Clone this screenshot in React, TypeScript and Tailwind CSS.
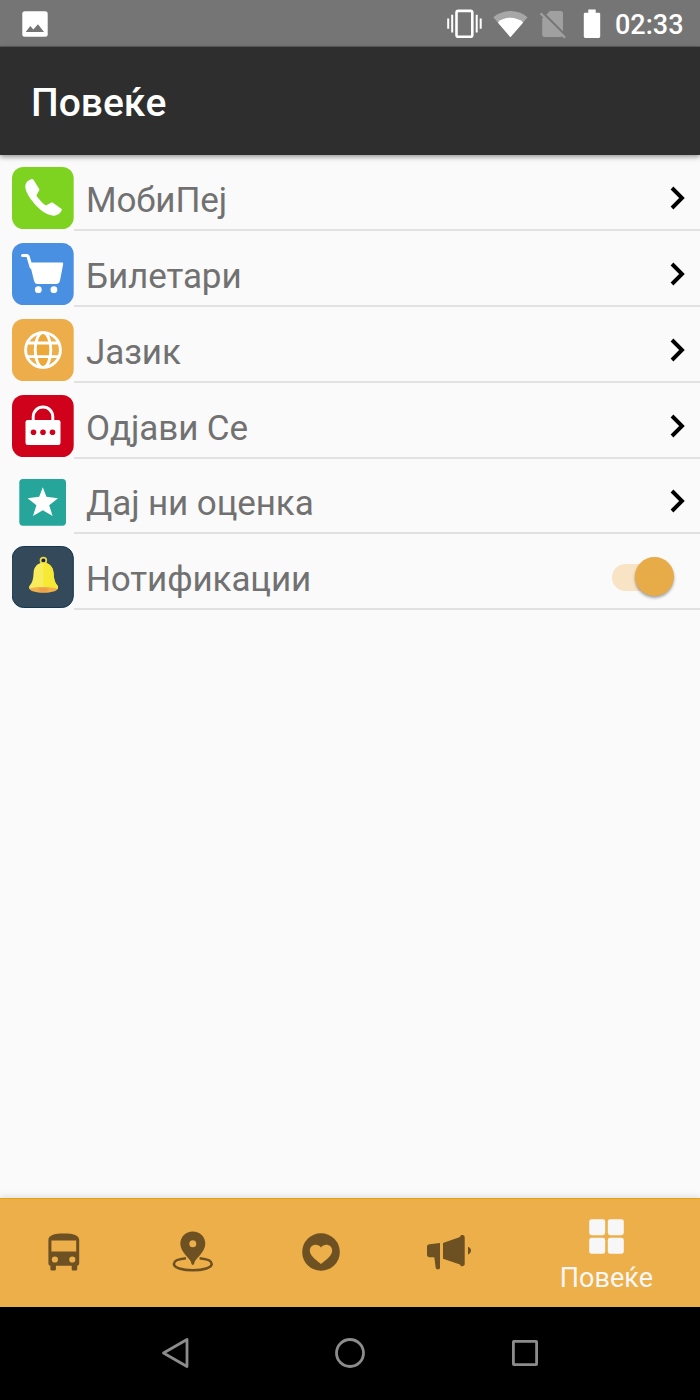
import React from "react";

function StatusBar() {
	return (
		<div className="flex h-[47px] shrink-0 items-center border-b border-[#5c5c5c] bg-[#757575] pl-[22px] pr-[15px] pt-px">
			<svg width="26" height="26" viewBox="0 0 26 26">
				<rect x="0.3" y="0.3" width="25.4" height="25.4" rx="2.5" fill="#fff" />
				<path d="M3.7 21 8.3 15l3 3.6 4.7-5.3L22 21z" fill="#757575" />
			</svg>
			<div className="ml-auto flex items-center">
				<svg width="35" height="30" viewBox="0 0 35 30" stroke="#fff" fill="none">
					<rect x="9.5" y="1.9" width="15.8" height="25.8" rx="1.8" strokeWidth="2.6" />
					<path d="M5.2 5.8v17.6M29.7 5.8v17.6M1.2 9.4v10.4M33.7 9.4v10.4" strokeWidth="2" />
				</svg>
				<svg className="ml-[11px]" width="35" height="30" viewBox="0 0 35 30">
					<path d="M0.3 8.3C10 0 25 0 34.5 8.3L17.4 28.3z" fill="#a7a7a7" />
					<path d="M4.8 13.4C11 7.4 23 7.2 30.2 13.4L17.4 28.3z" fill="#fff" />
				</svg>
				<svg className="ml-[12px]" width="26" height="30" viewBox="0 0 26 30">
					<path
						d="M10 2h10.6c1.400 0 2.400 1 2.400 2.400v21.400c0 1.300-1 2.200-2.400 2.200H4.500c-1.300 0-2.300-1-2.300-2.200V9.500z"
						fill="#a0a0a0"
					/>
					<path d="M2.2 3.2 26 27" stroke="#757575" strokeWidth="2.4" />
					<path d="M0.6 4.4 25 28.6" stroke="#a0a0a0" strokeWidth="2.2" />
				</svg>
				<svg className="ml-[17px]" width="18" height="30" viewBox="0 0 18 30">
					<path
						d="M5.3 0.5h7.4v3.2h3.1c.8 0 1.4.6 1.4 1.4v22.5c0 .8-.6 1.4-1.4 1.4H2.200c-.8 0-1.4-.6-1.4-1.4V5.1c0-.8.6-1.4 1.4-1.4h3.1z"
						fill="#fff"
					/>
				</svg>
				<span className="ml-[14px] w-[70px] whitespace-nowrap pt-[2px] text-[27px] font-medium leading-[30px] text-white">
					02:33
				</span>
			</div>
		</div>
	);
}

function Tile({ fill, children }: { fill: string; children: React.ReactNode }) {
	return (
		<svg className="shrink-0" width="62" height="62" viewBox="0 0 62 62">
			<rect width="61.7" height="62" rx="11.5" fill={fill} />
			{children}
		</svg>
	);
}

function PhoneIcon() {
	return (
		<Tile fill="#7ed321">
			<path
				d="M19.8 12.1C16.500 13 13.3 15.600 13.3 19.600c0 3 1.8 7.600 6 13.200 5.300 7.300 13.400 15.400 22.200 15.900 4.400.2 7.300-3 8.300-5.600.2-.6 0-1.100-.5-1.400l-8.400-6c-.6-.4-1.300-.3-1.900 0l-4.200 2.400c-.6.3-1.200.2-1.700-.2-3-2.300-5.800-5.300-8.200-8.500-.4-.6-.4-1.200 0-1.800l2.300-4c.3-.5.3-1 0-1.500l-5.700-9.300c-.4-.6-1-.9-1.700-.7z"
				fill="#fff"
			/>
		</Tile>
	);
}

function CartIcon() {
	return (
		<Tile fill="#4a90e2">
			<path
				d="M10.6 12.500h4.200c.8 0 1.100.4 1.300 1.100L19.200 24"
				stroke="#fff"
				strokeWidth="3.2"
				strokeLinecap="round"
				fill="none"
			/>
			<path
				d="M17.500 19.500h32.400c1 0 1.400.6 1.300 1.500L48 37.500c-.4 2.300-1.700 3.500-4 3.500H25.900c-2.200 0-3.200-1-3.800-3.100z"
				fill="#fff"
			/>
			<circle cx="26.3" cy="46.700" r="3.400" fill="#fff" />
			<circle cx="41.900" cy="46.700" r="3.400" fill="#fff" />
		</Tile>
	);
}

function GlobeIcon() {
	return (
		<Tile fill="#edad4a">
			<ellipse cx="31" cy="31" rx="7.6" ry="17.5" fill="#eca93a" />
			<g stroke="#fff" strokeWidth="2.9" fill="none">
				<circle cx="31" cy="31" r="17.4" />
				<ellipse cx="31" cy="31" rx="7.8" ry="17.4" />
				<path d="M15.500 24h31M15.500 37.600h31" />
			</g>
		</Tile>
	);
}

function LockIcon() {
	return (
		<Tile fill="#d0021b">
			<rect x="13.5" y="25" width="35" height="25" rx="2.2" fill="#fff" />
			<path d="M21.2 26v-4.200a9.800 9.800 0 0 1 19.600 0V26" stroke="#fff" strokeWidth="2.9" fill="none" />
			<g fill="#d0021b">
				<circle cx="21.5" cy="37.2" r="2.8" />
				<circle cx="31" cy="37.2" r="2.8" />
				<circle cx="40.5" cy="37.2" r="2.8" />
			</g>
		</Tile>
	);
}

function StarIcon() {
	return (
		<svg className="shrink-0" width="62" height="62" viewBox="0 0 62 62">
			<rect x="7.3" y="8" width="46.7" height="46.7" rx="3.6" fill="#26a69a" />
			<path
				d="M30.8 16.3 34.400 25.700 46 27.200 37.200 34.200 40.600 45 30.800 39.300 21 45 24.400 34.200 15.600 27.200 27.200 25.700z"
				fill="#fff"
			/>
		</svg>
	);
}

function BellIcon() {
	return (
		<svg className="shrink-0" width="62" height="62" viewBox="0 0 62 62">
			<rect x="0.3" y="0.5" width="61" height="61" rx="11.5" fill="#34495a" stroke="#143650" />
			<circle cx="31.400" cy="14.500" r="2.9" stroke="#f3d63a" strokeWidth="1.7" fill="#0d2f4c" />
			<path d="M17.200 42c0-4.500 28.800-4.500 28.800 0 0 6.300-28.800 6.300-28.800 0z" fill="#f2b04a" />
			<path
				d="M31.400 16.400c-5.800.3-9.500 4.200-9.800 10.200-.3 6.700-1.100 10-4.400 13.700v2.600c3-2.500 25.800-2.500 28.800 0v-2.600c-3.400-3.700-4-7-4.500-13.700-.4-6-4.300-9.900-10.100-10.200z"
				fill="#f9ec5c"
			/>
			<path
				d="M31.400 16.400c5.800.3 9.700 4.200 10.100 10.200.5 6.700 1.100 10 4.500 13.700v2.600c-2-1.600-8-2-14.600-2z"
				fill="#f6e933"
			/>
			<ellipse cx="31.5" cy="43.700" rx="5" ry="2" fill="#eba04a" />
		</svg>
	);
}

function Switch() {
	return (
		<div className="relative mr-[26px] flex h-10 w-[62px] items-center">
			<div className="h-[27px] w-[52px] rounded-full bg-[#f8e3c5]" />
			<div className="absolute right-0 top-0 size-[39px] rounded-full bg-[#e7ac47] shadow-[0_2px_3px_rgba(0,0,0,0.35)]" />
		</div>
	);
}

function Chevron() {
	return (
		<svg className="mr-[15px]" width="15" height="26" viewBox="0 0 15 26">
			<path d="M2 3 12 13 2 23" stroke="#000" strokeWidth="3.9" fill="none" />
		</svg>
	);
}

const items = [
	{ label: "МобиПеј", icon: <PhoneIcon /> },
	{ label: "Билетари", icon: <CartIcon /> },
	{ label: "Јазик", icon: <GlobeIcon /> },
	{ label: "Одјави Се", icon: <LockIcon /> },
	{ label: "Дај ни оценка", icon: <StarIcon /> },
	{ label: "Нотификации", icon: <BellIcon />, toggle: true },
];

function BottomNav() {
	return (
		<nav className="relative flex h-[109px] shrink-0 border-t border-[#e5a10f] bg-[#edaf4a] shadow-[0_-2px_6px_rgba(0,0,0,0.1)]">
			<div className="flex w-[128px] items-center justify-center pb-[2px]">
				<svg width="32" height="38" viewBox="0 0 32 38">
					<path
						fillRule="evenodd"
						d="M0.400 7C0.400 2.200 6 .4 15.800.4S31.200 2.200 31.200 7v23.500c0 1.200-.8 2.200-2 2.200v3.200c0 1-.6 1.600-1.600 1.600h-2.300c-1 0-1.600-.6-1.600-1.600v-3.200H7.900v3.200c0 1-.6 1.600-1.600 1.600H4c-1 0-1.600-.6-1.600-1.600v-3.200c-1.200 0-2-1-2-2.200zM3.400 7.600v11h24.800v-11zM6.900 23.400a3.100 3.100 0 1 0 0 6.200 3.100 3.100 0 0 0 0-6.200zm17.400 0a3.100 3.100 0 1 0 0 6.200 3.100 3.100 0 0 0 0-6.200z"
						fill="#6d5122"
					/>
				</svg>
			</div>
			<div className="flex w-[129px] items-center justify-center pb-[3px]">
				<svg width="42" height="41" viewBox="0 0 42 41">
					<path
						fillRule="evenodd"
						d="M20.8.4C13.800.4 8.300 5.800 8.300 12.600c0 4.200 2.200 8 5.200 11.500 3.200 3.700 5.400 5.200 5.900 8.400.4 1.900 2.400 1.900 2.800 0 .5-3.200 2.700-4.700 5.900-8.400 3-3.500 5.200-7.300 5.200-11.500C33.300 5.800 27.800.4 20.800.4zm0 8.900a3.500 3.500 0 1 1 0 7 3.500 3.500 0 0 1 0-7z"
						fill="#6d5122"
					/>
					<path
						d="M14 27.300C6.500 28 1.900 30.200 1.900 33c0 3.600 8 6.300 18.900 6.300S39.700 36.600 39.700 33c0-2.800-4.600-5-12.100-5.700"
						stroke="#6d5122"
						strokeWidth="2.600"
						fill="none"
					/>
				</svg>
			</div>
			<div className="flex w-[128px] items-center justify-center pb-[2px]">
				<svg width="38" height="38" viewBox="0 0 38 38">
					<circle cx="19" cy="19" r="18.8" fill="#6d5122" />
					<path
						d="M19 14.500c-3-4.800-11.200-3.400-11.200 3.100C7.800 22.700 13 26.300 19 31c6-4.700 11.200-8.300 11.200-13.400 0-6.500-8.200-7.900-11.200-3.100z"
						fill="#edaf4a"
					/>
				</svg>
			</div>
			<div className="flex w-[128px] items-center justify-center pb-px">
				<svg width="44" height="35" viewBox="0 0 44 35" fill="#6d5122">
					<path d="M2.500 9.200 13 8v24.700c0 2.300-4 2.300-4.300 0L7.300 22.300H2.500C1 22.300 0 21.300 0 19.800v-8C0 10.300 1 9.300 2.500 9.200z" />
					<path d="M16 8 33 2c.3-2.700 4.700-2.500 4.700.2v26.900c0 2.500-4.400 2.900-4.700.3l-17-5.600z" />
					<path d="M41 11.700c4 1.400 4 6.300 0 7.700z" />
				</svg>
			</div>
			<div className="flex flex-1 flex-col items-center pt-5">
				<svg width="35" height="35" viewBox="0 0 35 35" fill="#f7f7f7">
					<rect x="0.2" y="0.2" width="16" height="16" rx="2.4" />
					<rect x="18.8" y="0.2" width="16" height="16" rx="2.4" />
					<rect x="0.2" y="18.8" width="16" height="16" rx="2.4" />
					<rect x="18.8" y="18.8" width="16" height="16" rx="2.4" />
				</svg>
				<span className="mt-[9px] text-[27px] leading-[30px] text-[#f7f7f7]">Повеќе</span>
			</div>
		</nav>
	);
}

export default function App() {
	return (
		<div className="flex h-[1400px] w-[700px] flex-col overflow-hidden bg-[#fafafa] font-['Roboto','Noto_Sans',sans-serif]">
			<StatusBar />
			<header className="relative flex h-[108px] shrink-0 items-center bg-[#2e2e2e] pl-[31px] pt-[3px] shadow-[0_2px_5px_rgba(0,0,0,0.4)]">
				<h1 className="text-[39px] font-medium leading-[46px] text-white">Повеќе</h1>
			</header>
			<main className="flex-1 pt-[0.4px]">
				{items.map((item) => (
					<div key={item.label} className="flex h-[75.8px] pl-3 pt-3">
						{item.icon}
						<div className="flex flex-1 items-center justify-between border-b-2 border-[#e1e1e1] pl-3">
							<span className="pt-[6px] text-[35px] leading-[42px] tracking-[-0.1px] text-[#717171]">
								{item.label}
							</span>
							{item.toggle ? <Switch /> : <Chevron />}
						</div>
					</div>
				))}
			</main>
			<BottomNav />
			<footer className="flex h-[93px] shrink-0 items-center justify-between bg-black px-[161px] pb-px">
				<svg width="28" height="32" viewBox="0 0 28 32">
					<path d="M26 2.500v27L2.500 16z" stroke="#8c8c8c" strokeWidth="2.8" strokeLinejoin="round" fill="none" />
				</svg>
				<svg width="32" height="32" viewBox="0 0 32 32">
					<circle cx="16" cy="16" r="13.5" stroke="#8c8c8c" strokeWidth="2.8" fill="none" />
				</svg>
				<svg width="28" height="28" viewBox="0 0 28 28">
					<rect x="2.4" y="2.4" width="23.2" height="23.2" rx="0.5" stroke="#8c8c8c" strokeWidth="2.8" fill="none" />
				</svg>
			</footer>
		</div>
	);
}
